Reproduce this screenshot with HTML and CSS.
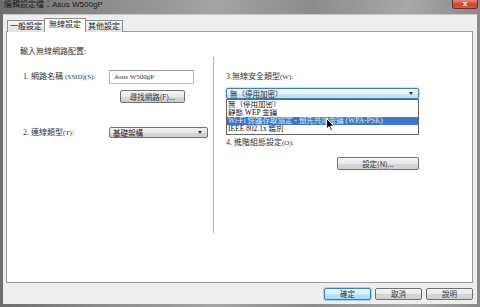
FILE: index.html
```html
<!DOCTYPE html>
<html lang="zh-Hant">
<head>
<meta charset="utf-8">
<link rel="stylesheet" href="styles.css">
</head>
<body>
<div class="window">
  <div class="titlebar">
    <span class="title">編輯設定檔：Asus W500gP</span>
    <span class="close">x</span>
  </div>
  <div class="client">
    <div class="tabs">
      <div class="tab">一般設定</div>
      <div class="tab active">無線設定</div>
      <div class="tab">其他設定</div>
    </div>
    <div class="panel">
      <div class="heading">輸入無線網路配置:</div>
      <div class="cols">
        <div class="col-left">
          <div class="row row1">
            <span class="label lbl-left">1. 網路名稱 <span class="lat">(SSID)(S):</span></span>
            <span class="textbox">Asus W500gP</span>
          </div>
          <div class="btn findbtn">尋找網路(F)...</div>
          <div class="row row2">
            <span class="label lbl-left">2. 連線類型<span class="lat">(T):</span></span>
            <span class="combo combo-type">基礎架構<span class="arrow"></span></span>
          </div>
        </div>
        <div class="col-right">
          <div class="label">3.無線安全類型<span class="lat">(W):</span></div>
          <div class="combo-wrap">
            <div class="combo combo-sec">無（停用加密）<span class="arrow"></span></div>
            <ul class="dropdown">
              <li>無（停用加密）</li>
              <li>靜態 WEP 金鑰</li>
              <li class="sel">Wi-Fi 保護存取協定 - 預先共用金鑰 (WPA-PSK)</li>
              <li>IEEE 802.1x 鑑別</li>
            </ul>
            <svg class="cursor" width="9" height="14" viewBox="0 0 9 14"><path d="M0.5 0.5 L0.5 11 L3 8.6 L4.8 12.8 L6.4 12.1 L4.7 8.1 L8 8.1 Z" fill="#000" stroke="#fff" stroke-width="1"/></svg>
          </div>
          <div class="label lbl4">4. 進階組態設定<span class="lat">(O):</span></div>
          <div class="btn setbtn">設定(N)...</div>
        </div>
      </div>
    </div>
    <div class="footer">
      <div class="btn fbtn default">確定</div>
      <div class="btn fbtn">取消</div>
      <div class="btn fbtn">說明</div>
    </div>
  </div>
</div>
</body>
</html>
```
FILE: styles.css
```css
* { box-sizing: border-box; }
html, body { margin: 0; padding: 0; }
body {
  width: 480px;
  height: 307px;
  overflow: hidden;
  font-family: "Liberation Serif", "Noto Sans CJK TC", serif;
  font-size: 8px;
  color: #333;
}
.window {
  width: 480px;
  height: 307px;
  background: linear-gradient(to right, #6e6e6e, #8a8a8a 20%, #a4a4a4 45%, #8c8c8c 65%, #a8a8a8 85%, #8a8a8a);
  display: flex;
  flex-direction: column;
  padding: 0 3px 3px 3px;
}
.titlebar {
  height: 14px;
  display: flex;
  justify-content: space-between;
  align-items: flex-start;
}
.title {
  font-family: "Liberation Sans", "Noto Sans CJK TC", sans-serif;
  font-size: 8px;
  color: #1c1c1c;
  line-height: 10px;
  margin-left: 1px;
}
.close {
  width: 26px;
  height: 9px;
  margin-right: -1px;
  background: linear-gradient(#e28a7a, #c8452f 55%, #d45a40);
  border: 1px solid #7a2a20;
  border-top: none;
  border-radius: 0 0 3px 3px;
  color: #fff;
  font-family: "Liberation Sans", sans-serif;
  font-weight: bold;
  font-size: 8px;
  line-height: 7px;
  text-align: center;
}
.client {
  flex: 1;
  background: #eeeeef;
  border-top: 1px solid #c8c8c8;
  padding: 4px 4px 0 3px;
  display: flex;
  flex-direction: column;
}
.tabs {
  display: flex;
  align-items: flex-end;
  height: 13px;
  padding-left: 1px;
  position: relative;
  z-index: 2;
  margin-bottom: -1px;
}
.tab {
  font-family: "Noto Sans CJK TC", sans-serif;
  font-size: 8px;
  line-height: 10px;
  height: 12px;
  padding: 0 2px;
  white-space: nowrap;
  text-align: center;
  border: 1px solid #8c8e94;
  border-bottom: none;
  background: linear-gradient(#f4f4f4, #e2e2e2);
  color: #222;
  margin-right: -1px;
}
.tab.active {
  height: 14px;
  padding: 0 4px;
  background: #fff;
  position: relative;
  z-index: 2;
}
.panel {
  height: 252px;
  background: #fff;
  border: 1px solid #9a9ca2;
  display: flex;
  flex-direction: column;
}
.heading {
  font-family: "Noto Sans CJK TC", sans-serif;
  line-height: 10px;
  margin: 14px 0 0 13px;
}
.cols {
  display: flex;
  margin-top: 1px;
}
.col-left {
  width: 207px;
  height: 176px;
  border-right: 1px solid #b4b4b4;
  padding-left: 16px;
}
.col-right {
  flex: 1;
  padding-left: 12px;
  padding-top: 15px;
}
.label { line-height: 10px; white-space: nowrap; }
.lat { font-size: 7px; }
.lbl-left { width: 86px; }
.row { display: flex; align-items: center; }
.row1 { margin-top: 13px; }
.textbox {
  width: 85px;
  height: 14px;
  border: 1px solid #b8b8b8;
  border-top-color: #9a9a9a;
  background: #fff;
  padding-left: 4px;
  line-height: 12px;
  font-size: 7px;
  color: #333;
}
.btn {
  height: 13px;
  border: 1px solid #707070;
  border-radius: 2px;
  background: linear-gradient(#f6f6f6, #e8e8e8 50%, #d8d8d8 51%, #cfcfcf);
  text-align: center;
  font-family: "Noto Sans CJK TC", sans-serif;
  font-size: 7.5px;
  line-height: 11px;
  color: #333;
}
.findbtn { width: 65px; margin: 6px 0 0 97px; }
.row2 { margin-top: 24px; }
.combo {
  position: relative;
  height: 11px;
  border: 1px solid #707070;
  border-radius: 2px;
  background: linear-gradient(#f4f4f4, #e6e6e6 50%, #d6d6d6 51%, #cfcfcf);
  font-family: "Noto Sans CJK TC", sans-serif;
  font-size: 7.5px;
  line-height: 9px;
  padding-left: 3px;
  color: #222;
}
.combo-type { width: 99px; }
.arrow {
  position: absolute;
  right: 5px;
  top: 3px;
  width: 0;
  height: 0;
  border-left: 2.5px solid transparent;
  border-right: 2.5px solid transparent;
  border-top: 3px solid #333;
}
.combo-wrap {
  position: relative;
  width: 193px;
  margin-top: 6px;
}
.combo-sec {
  width: 193px;
  border-color: #3c7fb1;
  background: linear-gradient(#f2f9fd, #e4f2fb 50%, #cbe6f7 51%, #bfe0f5);
  box-shadow: 0 0 0 0.5px #8cc2e8;
}
.dropdown {
  position: absolute;
  left: 0;
  top: 11px;
  width: 193px;
  margin: 0;
  padding: 1px 0 1px;
  list-style: none;
  background: #fff;
  border: 1px solid #646464;
  z-index: 3;
}
.dropdown li {
  height: 8px;
  line-height: 8px;
  font-family: "Liberation Serif", "Noto Sans CJK TC", serif;
  font-size: 7.5px;
  padding-left: 1px;
  color: #111;
  white-space: nowrap;
  overflow: hidden;
}
.dropdown li.sel {
  background: #3d78c4;
  color: #dfe8f5;
}
.cursor {
  position: absolute;
  left: 100px;
  top: 30px;
  z-index: 4;
}
.lbl4 { margin-top: 39px; }
.setbtn { width: 82px; margin: 9px 0 0 111px; }
.footer {
  display: flex;
  justify-content: flex-end;
  gap: 4px;
  margin-top: 5px;
  padding-right: 0;
}
.fbtn { width: 47px; height: 12px; line-height: 10px; }
.default {
  border-color: #3c7fb1;
  background: linear-gradient(#eaf6fd, #d9f0fc 50%, #bee6fd 51%, #a7d9f5);
  box-shadow: 0 0 0 1px #a6d2ef;
}
```
